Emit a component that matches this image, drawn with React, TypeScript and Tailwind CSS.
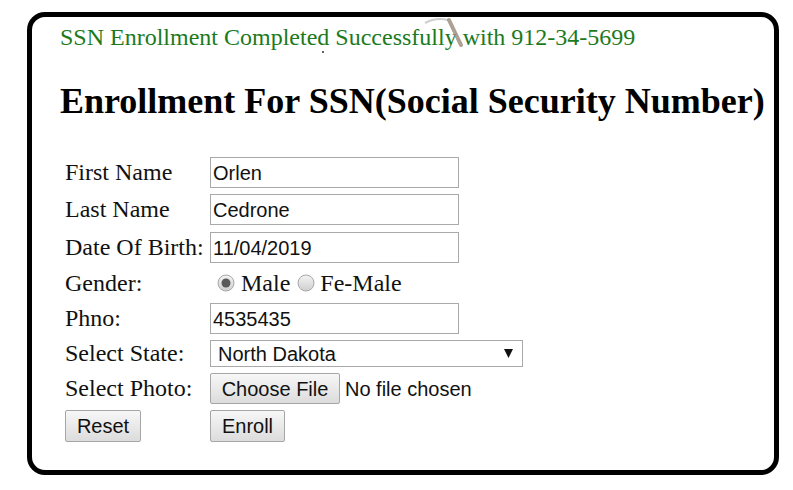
import type { ReactNode } from "react";

const serif = "font-['Liberation_Serif','Times_New_Roman',serif]";
const sans = "font-['Liberation_Sans',Arial,sans-serif]";

function Row({ label, children, className = "" }: { label?: string; children: ReactNode; className?: string }) {
  return (
    <div className={"flex items-center " + className}>
      <div className={`w-[145px] shrink-0 pb-[1px] text-[24px] leading-none text-[#111] ${serif}`}>{label}</div>
      {children}
    </div>
  );
}

function TextBox({ value }: { value: string }) {
  return (
    <div className={`flex h-[31px] w-[249px] items-center border border-[#a9a9a9] bg-white pl-[2px] text-[20px] leading-none text-[#111] ${sans}`}>
      {value}
    </div>
  );
}

function Btn({ children, className = "" }: { children: ReactNode; className?: string }) {
  return (
    <div className={`flex items-center justify-center rounded-[2px] border border-[#a6a6a6] bg-gradient-to-b from-[#f7f7f7] to-[#dcdcdc] text-[20px] leading-none text-[#111] ${sans} ${className}`}>
      {children}
    </div>
  );
}

function Radio({ checked }: { checked?: boolean }) {
  return (
    <svg width="18" height="18" viewBox="0 0 18 18" className="shrink-0">
      <defs>
        <linearGradient id={checked ? "rg1" : "rg2"} x1="0" y1="0" x2="0" y2="1">
          <stop offset="0" stopColor="#f4f4f4" />
          <stop offset="1" stopColor="#cfcfcf" />
        </linearGradient>
      </defs>
      <circle cx="9" cy="9" r="8" fill={`url(#${checked ? "rg1" : "rg2"})`} stroke="#a8a8a8" strokeWidth="1" />
      {checked && <circle cx="9" cy="9" r="4.5" fill="#5a5a5a" />}
    </svg>
  );
}

export default function App() {
  return (
    <div className="relative h-[490px] w-[793px] bg-white">
      <div className="ml-[27px] pt-[12px]">
        <div className="h-[463px] w-[752px] rounded-[18px] border-[5px] border-black">
          <p className={`ml-[28px] mt-[8px] text-[24px] leading-none text-[#1c7a1c] ${serif}`}>
            SSN Enrollment Completed Successfully with 912-34-5699
          </p>
          <h2 className={`ml-[28px] mt-[34px] text-[36px] font-bold leading-none text-black ${serif}`}>
            Enrollment For SSN(Social Security Number)
          </h2>
          <div className="ml-[33px] mt-[38px] flex flex-col">
            <Row label="First Name">
              <TextBox value="Orlen" />
            </Row>
            <Row label="Last Name" className="mt-[6px]">
              <TextBox value="Cedrone" />
            </Row>
            <Row label="Date Of Birth:" className="mt-[7px]">
              <TextBox value="11/04/2019" />
            </Row>
            <Row label="Gender:" className="mt-[5px] h-[30px]">
              <div className={`flex items-center text-[24px] leading-none text-[#111] ${serif}`}>
                <span className="ml-[7px]"><Radio checked /></span>
                <span className="ml-[6px]">Male</span>
                <span className="ml-[7px]"><Radio /></span>
                <span className="ml-[5px]">Fe-Male</span>
              </div>
            </Row>
            <Row label="Phno:" className="mt-[5px]">
              <TextBox value="4535435" />
            </Row>
            <Row label="Select State:" className="mt-[6px]">
              <div className={`flex h-[27px] w-[313px] items-center justify-between border border-[#a9a9a9] bg-white pl-[7px] pr-[9px] text-[20px] leading-none text-[#111] ${sans}`}>
                <span>North Dakota</span>
                <svg width="9" height="9" viewBox="0 0 9 9">
                  <polygon points="0,0 9,0 4.5,9" fill="#111" />
                </svg>
              </div>
            </Row>
            <Row label="Select Photo:" className="mt-[6px]">
              <Btn className="h-[31px] w-[130px]">Choose File</Btn>
              <span className={`ml-[5px] text-[20px] leading-none text-[#111] ${sans}`}>No file chosen</span>
            </Row>
            <div className="mt-[6px] flex items-center">
              <div className="w-[145px] shrink-0">
                <Btn className="h-[32px] w-[76px]">Reset</Btn>
              </div>
              <Btn className="h-[32px] w-[75px]">Enroll</Btn>
            </div>
          </div>
        </div>
      </div>
      {/* stray cursor marks from the original capture */}
      <svg className="pointer-events-none absolute left-[420px] top-[14px]" width="50" height="36" viewBox="0 0 50 36">
        <path d="M5 9 Q16 3 28 6" stroke="#cfcfcf" strokeWidth="2" fill="none" />
        <path d="M29 6 L41 31" stroke="#a09080" strokeWidth="4" strokeLinecap="round" opacity="0.85" />
      </svg>
      <div className="absolute left-[322px] top-[51px] h-[2px] w-[2px] rounded-full bg-[#333]" />
    </div>
  );
}
